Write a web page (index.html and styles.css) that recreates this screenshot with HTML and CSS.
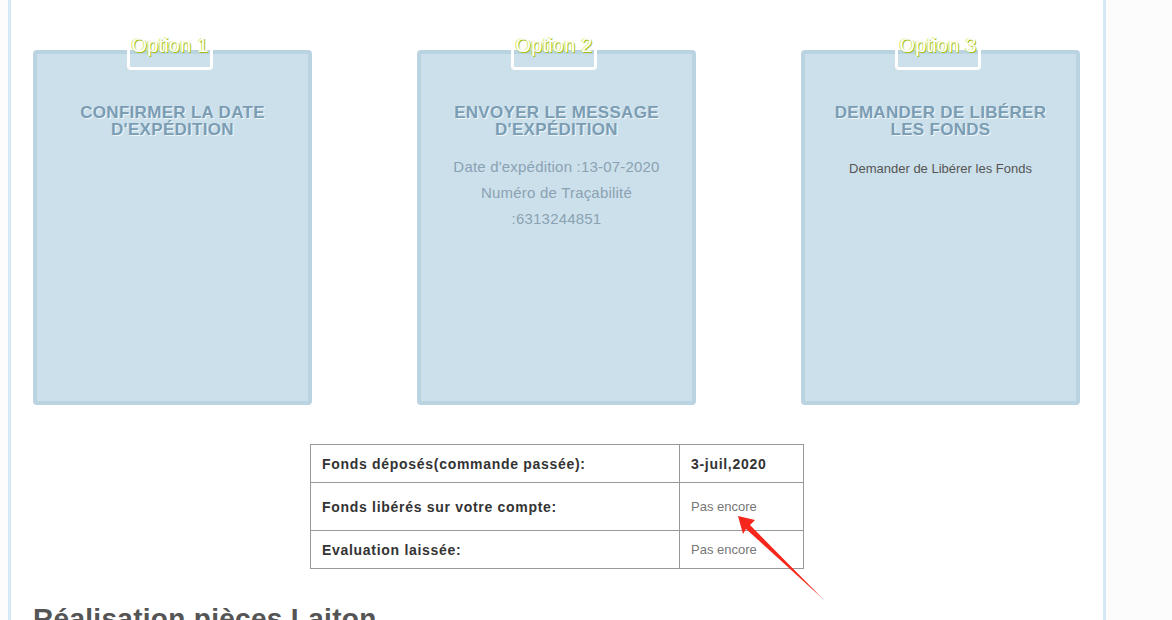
FILE: index.html
```html
<!DOCTYPE html>
<html lang="fr">

<head>
  <meta charset="UTF-8" />
  <title>Suivi de commande</title>
  <link rel="stylesheet" href="styles.css">
</head>

<body>
  <section class="page">
    <div class="options">
      <div class="option">
        <div class="tab"><span>Option 1</span></div>
        <h2>Confirmer la date d'expédition</h2>
      </div>
      <div class="option">
        <div class="tab"><span>Option 2</span></div>
        <h2>Envoyer le message d'expédition</h2>
        <p class="shipinfo">Date d'expédition :13-07-2020<br>Numéro de Traçabilité<br>:6313244851</p>
      </div>
      <div class="option">
        <div class="tab"><span>Option 3</span></div>
        <h2>Demander de libérer les fonds</h2>
        <p class="release">Demander de Libérer les Fonds</p>
      </div>
    </div>

    <table class="status">
      <tr>
        <th>Fonds déposés(commande passée):</th>
        <td class="date">3-juil,2020</td>
      </tr>
      <tr class="tall">
        <th>Fonds libérés sur votre compte:</th>
        <td>Pas encore</td>
      </tr>
      <tr>
        <th>Evaluation laissée:</th>
        <td>Pas encore</td>
      </tr>
    </table>

    <h1 class="project">Réalisation pièces Laiton</h1>

    <!-- red pointer drawn on top of the screenshot -->
    <svg class="pointer" width="100" height="100" viewBox="730 510 100 100">
      <polygon points="738,516 755,520 750,525 823,599 746,529 743,534" fill="#f5261b" />
    </svg>
  </section>
</body>

</html>
```

FILE: styles.css
```css
/* Reset */
* {
    margin: 0;
    padding: 0;
    box-sizing: border-box;
}

body {
    background-color: #fcfcfc;
    font-family: "Liberation Sans", Arial, sans-serif;
    height: 620px;
    overflow: hidden;
}

/* Main bordered column */
.page {
    position: relative;
    width: 1098px;
    margin-left: 8px;
    padding: 50px 22px 0 22px;
    min-height: 620px;
    background-color: #fff;
    border-left: 3px solid #d6e9f7;
    border-right: 3px solid #d6e9f7;
}

/* Option cards */
.options {
    display: flex;
    gap: 105px;
}

.option {
    position: relative;
    width: 279px;
    height: 355px;
    padding: 50px 16px 0;
    background-color: #cce0eb;
    border: 4px solid #b9d3e0;
    border-radius: 4px;
    text-align: center;
}

.tab {
    position: absolute;
    top: -5px;
    left: 90px;
    width: 86px;
    height: 21px;
    border: 3px solid #fff;
    border-top: none;
    border-radius: 0 0 4px 4px;
}

.tab span {
    display: block;
    margin-top: -14px;
    font-size: 20px;
    line-height: 20px;
    color: #fff;
    letter-spacing: 0.2px;
    text-shadow: 1px 1px 0 #a4bf12, -1px 0 0 #d8e86a;
}

.option h2 {
    font-size: 17px;
    line-height: 17px;
    font-weight: bold;
    letter-spacing: 0.3px;
    text-transform: uppercase;
    color: #7b9db4;
    text-shadow: 1px 1px 0 #eef6fa;
}

.shipinfo {
    margin-top: 16px;
    font-size: 15px;
    line-height: 26px;
    letter-spacing: 0.2px;
    color: #8aa2b3;
}

.release {
    margin-top: 23px;
    font-size: 13px;
    line-height: 16px;
    color: #555;
}

/* Status table */
.status {
    margin: 39px auto 0;
    width: 494px;
    border-collapse: collapse;
}

.status th,
.status td {
    border: 1px solid #999;
    height: 38px;
    text-align: left;
    vertical-align: middle;
}

.status th {
    width: 369px;
    padding-left: 11px;
    font-size: 14px;
    font-weight: bold;
    color: #333;
    letter-spacing: 0.7px;
}

.status td {
    padding-left: 11px;
    font-size: 13px;
    color: #777;
}

.status td.date {
    font-size: 14px;
    font-weight: bold;
    letter-spacing: 0.7px;
    color: #333;
}

.status .tall th,
.status .tall td {
    height: 48px;
}

/* Project title */
.project {
    margin-top: 34px;
    font-size: 28px;
    font-weight: bold;
    letter-spacing: 0.3px;
    color: #555;
}

/* Annotation arrow */
.pointer {
    position: absolute;
    left: 719px;
    top: 510px;
}
```
